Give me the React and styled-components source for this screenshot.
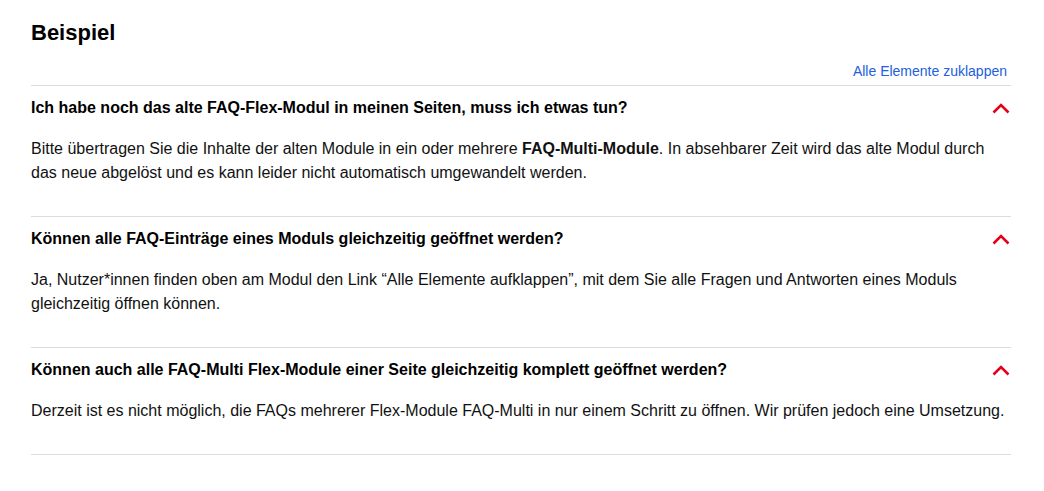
import React, { useState } from "react";
import styled, { createGlobalStyle } from "styled-components";

const GlobalStyle = createGlobalStyle`
  body {
    margin: 0;
    background: #fff;
    font-family: "Liberation Sans", Arial, sans-serif;
    color: #000;
  }
`;

const Page = styled.div`
  width: 980px;
  padding: 19px 0 0 31px;
`;

const Title = styled.h2`
  margin: 0;
  font-size: 22px;
  line-height: 28px;
  font-weight: bold;
`;

const Toolbar = styled.div`
  display: flex;
  justify-content: flex-end;
  padding: 15px 4px 5px 0;
`;

const ToggleAll = styled.a`
  font-size: 14px;
  line-height: 18px;
  color: #2160de;
  cursor: pointer;
  text-decoration: none;
`;

const List = styled.div`
  border-bottom: 1px solid #dcdcdc;
`;

const Item = styled.div`
  border-top: 1px solid #dcdcdc;
  padding-bottom: ${(p) => (p.$open ? "31px" : "0")};
`;

const Question = styled.button`
  display: flex;
  width: 100%;
  align-items: center;
  justify-content: space-between;
  padding: 12px 0 11px;
  border: 0;
  background: none;
  cursor: pointer;
  text-align: left;
  font-family: inherit;
  font-size: 16px;
  line-height: 20px;
  font-weight: bold;
  color: #000;
`;

const Chevron = styled.svg`
  flex: none;
  margin-right: 1px;
  transform: ${(p) => (p.$open ? "none" : "rotate(180deg)")};
`;

const Answer = styled.p`
  margin: 8px 0 0;
  font-size: 16px;
  line-height: 24px;
  color: #111;
`;

const faqs = [
  {
    q: "Ich habe noch das alte FAQ-Flex-Modul in meinen Seiten, muss ich etwas tun?",
    a: (
      <>
        Bitte übertragen Sie die Inhalte der alten Module in ein oder mehrere{" "}
        <b>FAQ-Multi-Module</b>. In absehbarer Zeit wird das alte Modul durch das
        neue abgelöst und es kann leider nicht automatisch umgewandelt werden.
      </>
    ),
  },
  {
    q: "Können alle FAQ-Einträge eines Moduls gleichzeitig geöffnet werden?",
    a: (
      <>
        Ja, Nutzer*innen finden oben am Modul den Link “Alle Elemente
        aufklappen”, mit dem Sie alle Fragen und Antworten eines Moduls
        gleichzeitig öffnen können.
      </>
    ),
  },
  {
    q: "Können auch alle FAQ-Multi Flex-Module einer Seite gleichzeitig komplett geöffnet werden?",
    a: (
      <>
        Derzeit ist es nicht möglich, die FAQs mehrerer Flex-Module FAQ-Multi in
        nur einem Schritt zu öffnen. Wir prüfen jedoch eine Umsetzung.
      </>
    ),
  },
];

export default function App() {
  const [open, setOpen] = useState(faqs.map(() => true));
  const allOpen = open.every(Boolean);

  const toggle = (i) =>
    setOpen((prev) => prev.map((v, j) => (j === i ? !v : v)));

  return (
    <Page>
      <GlobalStyle />
      <Title>Beispiel</Title>
      <Toolbar>
        <ToggleAll onClick={() => setOpen(faqs.map(() => !allOpen))}>
          {allOpen ? "Alle Elemente zuklappen" : "Alle Elemente aufklappen"}
        </ToggleAll>
      </Toolbar>
      <List>
        {faqs.map((item, i) => (
          <Item key={i} $open={open[i]}>
            <Question onClick={() => toggle(i)}>
              {item.q}
              <Chevron
                $open={open[i]}
                width="18"
                height="11"
                viewBox="0 0 18 11"
              >
                <path
                  d="M1.5 9.5 L9 2 L16.5 9.5"
                  fill="none"
                  stroke="#e2001a"
                  strokeWidth="2.6"
                />
              </Chevron>
            </Question>
            {open[i] && <Answer>{item.a}</Answer>}
          </Item>
        ))}
      </List>
    </Page>
  );
}
